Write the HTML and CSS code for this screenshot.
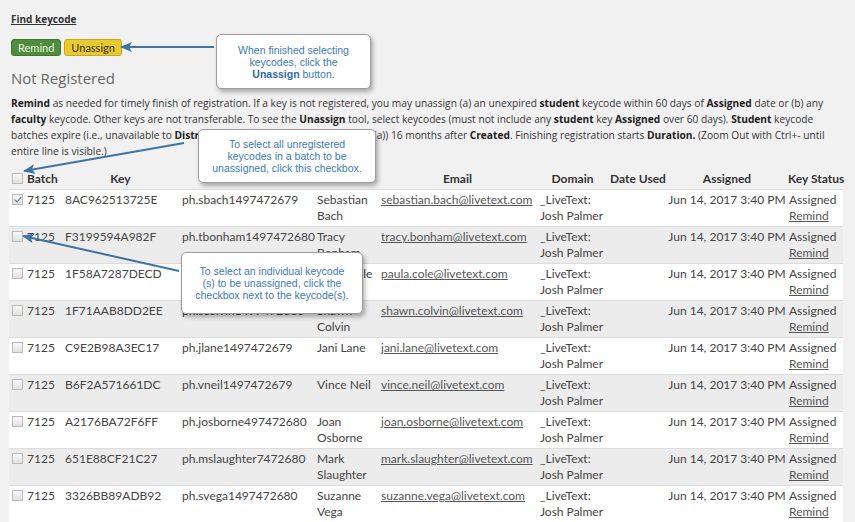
FILE: index.html
```html
<!DOCTYPE html>
<html lang="en">
<head>
  <meta charset="UTF-8">
  <title>Keycodes - Not Registered</title>
  <link rel="stylesheet" href="styles.css">
</head>
<body>

<div class="page">
  <a class="find-link" href="#">Find keycode</a>

  <div class="actions">
    <button class="btn btn-remind">Remind</button>
    <button class="btn btn-unassign">Unassign</button>
  </div>

  <h3 class="section-title">Not Registered</h3>

  <p class="notes">
    <b>Remind</b> as needed for timely finish of registration. If a key is not registered, you may unassign (a) an unexpired <b>student</b> keycode within 60 days of <b>Assigned</b> date or (b) any
    <b>faculty</b> keycode. Other keys are not transferable. To see the <b>Unassign</b> tool, select keycodes (must not include any <b>student</b> key <b>Assigned</b> over 60 days). <b>Student</b> keycode
    batches expire (i.e., unavailable to <b>Distribution</b> and unavailable to unassign (a)) 16 months after <b>Created</b>. Finishing registration starts <b>Duration.</b> (Zoom Out with Ctrl+- until
    entire line is visible.)
  </p>

  <table class="keys">
    <colgroup>
      <col class="c-batch">
      <col class="c-key">
      <col class="c-user">
      <col class="c-name">
      <col class="c-email">
      <col class="c-domain">
      <col class="c-used">
      <col class="c-assigned">
      <col class="c-status">
    </colgroup>
    <thead>
      <tr>
        <th class="th-batch"><input type="checkbox" class="cb"> Batch</th>
        <th>Key</th>
        <th></th>
        <th></th>
        <th>Email</th>
        <th>Domain</th>
        <th>Date Used</th>
        <th>Assigned</th>
        <th>Key Status</th>
      </tr>
    </thead>
    <tbody>
      <tr>
        <td><input type="checkbox" class="cb" checked> 7125</td>
        <td class="nw">8AC962513725E</td>
        <td class="nw">ph.sbach1497472679</td>
        <td>Sebastian Bach</td>
        <td class="nw"><a href="#">sebastian.bach@livetext.com</a></td>
        <td>_LiveText: Josh Palmer</td>
        <td></td>
        <td class="nw center">Jun 14, 2017 3:40 PM</td>
        <td>Assigned<br><a href="#">Remind</a></td>
      </tr>
      <tr>
        <td><input type="checkbox" class="cb"> 7125</td>
        <td class="nw">F3199594A982F</td>
        <td class="nw">ph.tbonham1497472680</td>
        <td>Tracy Bonham</td>
        <td class="nw"><a href="#">tracy.bonham@livetext.com</a></td>
        <td>_LiveText: Josh Palmer</td>
        <td></td>
        <td class="nw center">Jun 14, 2017 3:40 PM</td>
        <td>Assigned<br><a href="#">Remind</a></td>
      </tr>
      <tr>
        <td><input type="checkbox" class="cb"> 7125</td>
        <td class="nw">1F58A7287DECD</td>
        <td class="nw">ph.pcole1497472680</td>
        <td>Paula Cole</td>
        <td class="nw"><a href="#">paula.cole@livetext.com</a></td>
        <td>_LiveText: Josh Palmer</td>
        <td></td>
        <td class="nw center">Jun 14, 2017 3:40 PM</td>
        <td>Assigned<br><a href="#">Remind</a></td>
      </tr>
      <tr>
        <td><input type="checkbox" class="cb"> 7125</td>
        <td class="nw">1F71AAB8DD2EE</td>
        <td class="nw">ph.scolvin1497472680</td>
        <td>Shawn Colvin</td>
        <td class="nw"><a href="#">shawn.colvin@livetext.com</a></td>
        <td>_LiveText: Josh Palmer</td>
        <td></td>
        <td class="nw center">Jun 14, 2017 3:40 PM</td>
        <td>Assigned<br><a href="#">Remind</a></td>
      </tr>
      <tr>
        <td><input type="checkbox" class="cb"> 7125</td>
        <td class="nw">C9E2B98A3EC17</td>
        <td class="nw">ph.jlane1497472679</td>
        <td>Jani Lane</td>
        <td class="nw"><a href="#">jani.lane@livetext.com</a></td>
        <td>_LiveText: Josh Palmer</td>
        <td></td>
        <td class="nw center">Jun 14, 2017 3:40 PM</td>
        <td>Assigned<br><a href="#">Remind</a></td>
      </tr>
      <tr>
        <td><input type="checkbox" class="cb"> 7125</td>
        <td class="nw">B6F2A571661DC</td>
        <td class="nw">ph.vneil1497472679</td>
        <td>Vince Neil</td>
        <td class="nw"><a href="#">vince.neil@livetext.com</a></td>
        <td>_LiveText: Josh Palmer</td>
        <td></td>
        <td class="nw center">Jun 14, 2017 3:40 PM</td>
        <td>Assigned<br><a href="#">Remind</a></td>
      </tr>
      <tr>
        <td><input type="checkbox" class="cb"> 7125</td>
        <td class="nw">A2176BA72F6FF</td>
        <td class="nw">ph.josborne497472680</td>
        <td>Joan Osborne</td>
        <td class="nw"><a href="#">joan.osborne@livetext.com</a></td>
        <td>_LiveText: Josh Palmer</td>
        <td></td>
        <td class="nw center">Jun 14, 2017 3:40 PM</td>
        <td>Assigned<br><a href="#">Remind</a></td>
      </tr>
      <tr>
        <td><input type="checkbox" class="cb"> 7125</td>
        <td class="nw">651E88CF21C27</td>
        <td class="nw">ph.mslaughter7472680</td>
        <td>Mark Slaughter</td>
        <td class="nw"><a href="#">mark.slaughter@livetext.com</a></td>
        <td>_LiveText: Josh Palmer</td>
        <td></td>
        <td class="nw center">Jun 14, 2017 3:40 PM</td>
        <td>Assigned<br><a href="#">Remind</a></td>
      </tr>
      <tr>
        <td><input type="checkbox" class="cb"> 7125</td>
        <td class="nw">3326BB89ADB92</td>
        <td class="nw">ph.svega1497472680</td>
        <td>Suzanne Vega</td>
        <td class="nw"><a href="#">suzanne.vega@livetext.com</a></td>
        <td>_LiveText: Josh Palmer</td>
        <td></td>
        <td class="nw center">Jun 14, 2017 3:40 PM</td>
        <td>Assigned<br><a href="#">Remind</a></td>
      </tr>
    </tbody>
  </table>
</div>

<!-- help callouts -->
<div class="callout callout-unassign">
  <span>When finished selecting keycodes, click the <b>Unassign</b> button.</span>
</div>
<div class="callout callout-batch">
  <span>To select all unregistered keycodes in a batch to be unassigned, click this checkbox.</span>
</div>
<div class="callout callout-single">
  <span>To select an individual keycode (s) to be unassigned, click the checkbox next to the keycode(s).</span>
</div>

<svg class="arrows" width="855" height="522" viewBox="0 0 855 522">
  <defs>
    <marker id="head" viewBox="0 0 12 10" refX="11" refY="5" markerWidth="12" markerHeight="10" markerUnits="userSpaceOnUse" orient="auto">
      <path d="M0,0 L12,5 L0,10 L3,5 z" fill="#3f73a3"/>
    </marker>
  </defs>
  <line x1="214" y1="47" x2="121" y2="47" marker-end="url(#head)"/>
  <line x1="184" y1="143" x2="24" y2="171" marker-end="url(#head)"/>
  <line x1="179" y1="271" x2="23" y2="236" marker-end="url(#head)"/>
</svg>

</body>
</html>
```

FILE: styles.css
```css
body {
  margin: 0;
  background: #f1f1f1;
  font-family: 'Open Sans', sans-serif;
  color: #333;
  position: relative;
}
.page {
  padding: 6px 12px 0 9px;
}
.find-link {
  display: inline-block;
  margin-left: 2px;
  font-size: 10px;
  font-weight: bold;
  color: #333;
  text-decoration: underline;
  line-height: 14px;
}
.actions {
  display: flex;
  gap: 3px;
  margin: 11px 0 0 2px;
}
.btn {
  font-family: Lato, sans-serif;
  font-size: 11px;
  height: 17px;
  padding: 0 6px;
  border-radius: 3px;
  line-height: 15px;
  cursor: pointer;
}
.btn-remind {
  background: #4f8c3c;
  border: 1px solid #3f7530;
  color: #e9f4e2;
}
.btn-unassign {
  background: #e9c930;
  border: 1px solid #c8a91e;
  color: #333;
}
.section-title {
  margin: 12px 0 0 2px;
  font-size: 15px;
  font-weight: normal;
  color: #666;
  line-height: 20px;
}
.notes {
  margin: 7px 0 0 2px;
  font-size: 10.2px;
  line-height: 16px;
  color: #333;
}
.notes b {
  color: #222;
}

/* keycode table */
.keys {
  width: 100%;
  margin-top: 6px;
  border-collapse: collapse;
  table-layout: fixed;
  font-family: Lato, sans-serif;
  font-size: 12px;
  color: #444;
}
.c-batch { width: 53px; }
.c-key { width: 117px; }
.c-user { width: 135px; }
.c-name { width: 64px; }
.c-email { width: 159px; }
.c-domain { width: 71px; }
.c-used { width: 60px; }
.c-assigned { width: 118px; }
.c-status { width: 57px; }
.keys th {
  padding: 7px 2px 3px;
  line-height: 14px;
  font-weight: bold;
  color: #333;
  text-align: center;
  white-space: nowrap;
}
.keys th.th-batch {
  text-align: left;
  padding-left: 3px;
}
.keys td {
  padding: 2px 3px 2px;
  line-height: 16px;
  vertical-align: top;
  border-top: 1px solid #dcdcdc;
}
.keys tbody tr:nth-child(odd) {
  background: #fff;
}
.keys tbody tr:nth-child(even) {
  background: #ececec;
}
.keys td.nw {
  white-space: nowrap;
}
.keys td.center {
  text-align: center;
  padding: 2px 0;
}
.keys a {
  color: #555;
  text-decoration: underline;
}
.cb {
  appearance: none;
  -webkit-appearance: none;
  width: 11px;
  height: 11px;
  margin: 0 1px 0 0;
  border: 1px solid #bbb;
  background: linear-gradient(#fafafa, #e0e0e0);
  vertical-align: -1px;
  position: relative;
}
.cb:checked::after {
  content: '';
  position: absolute;
  left: 3px;
  top: 0;
  width: 3px;
  height: 6px;
  border: solid #4a6e96;
  border-width: 0 1.5px 1.5px 0;
  transform: rotate(40deg);
}

/* help callouts */
.callout {
  position: absolute;
  display: flex;
  align-items: center;
  justify-content: center;
  box-sizing: border-box;
  background: #fff;
  border: 1px solid #9c9c9c;
  border-radius: 5px;
  box-shadow: 2px 3px 4px rgba(0, 0, 0, 0.3);
  font-family: 'Liberation Sans', Arial, sans-serif;
  font-size: 10.5px;
  line-height: 12px;
  color: #3d7bb6;
  text-align: center;
}
.callout b {
  color: #2f6aa3;
}
.callout-unassign {
  left: 216px;
  top: 34px;
  width: 155px;
  height: 55px;
  padding: 0 12px;
}
.callout-batch {
  left: 198px;
  top: 129px;
  width: 178px;
  height: 54px;
  padding: 0 9px;
}
.callout-single {
  left: 181px;
  top: 252px;
  width: 182px;
  height: 62px;
  padding: 0 12px;
}
.arrows {
  position: absolute;
  top: 0;
  left: 0;
  pointer-events: none;
}
.arrows line {
  stroke: #3f73a3;
  stroke-width: 2;
}
```
